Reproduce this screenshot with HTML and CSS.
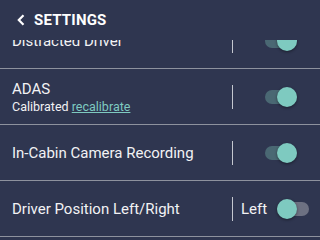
FILE: index.html
```html
<!DOCTYPE html>
<html lang="en">
<head>
    <meta charset="UTF-8">
    <meta name="viewport" content="width=device-width, initial-scale=1.0">
    <title>Settings</title>
    <link rel="stylesheet" href="styles.css">
</head>
<body>
    <div class="header">
        <svg class="back" width="10" height="12" viewBox="0 0 10 12">
            <polyline points="7.5,1.2 2.8,6 7.5,10.8" fill="none" stroke="#ffffff" stroke-width="2.2"/>
        </svg>
        <span class="title">SETTINGS</span>
    </div>

    <div class="viewport">
        <div class="list">
            <div class="row">
                <div class="label">Distracted Driver</div>
                <div class="controls">
                    <div class="divider"></div>
                    <div class="switch on"><div class="knob"></div></div>
                </div>
            </div>
            <div class="row">
                <div class="label">
                    ADAS
                    <div class="sub">Calibrated <a href="#" class="link">recalibrate</a></div>
                </div>
                <div class="controls">
                    <div class="divider"></div>
                    <div class="switch on"><div class="knob"></div></div>
                </div>
            </div>
            <div class="row">
                <div class="label">In-Cabin Camera Recording</div>
                <div class="controls">
                    <div class="divider"></div>
                    <div class="switch on"><div class="knob"></div></div>
                </div>
            </div>
            <div class="row">
                <div class="label">Driver Position Left/Right</div>
                <div class="controls">
                    <div class="divider"></div>
                    <span class="side">Left</span>
                    <div class="switch off"><div class="knob"></div></div>
                </div>
            </div>
        </div>
    </div>
</body>
</html>
```

FILE: styles.css
```css
body {
    margin: 0;
    width: 320px;
    height: 240px;
    overflow: hidden;
    background: #2f3650;
    color: #f2f2f4;
    font-family: Roboto, "Noto Sans", sans-serif;
}
.header {
    height: 40px;
    display: flex;
    align-items: center;
    padding-left: 16px;
    background: #2f3650;
}
.back {
    display: block;
    margin-right: 8px;
}
.title {
    font-size: 15px;
    font-weight: bold;
    letter-spacing: 0.2px;
    color: #ffffff;
}
.viewport {
    height: 200px;
    overflow: hidden;
}
.list {
    margin-top: -27px;
}
.row {
    height: 55px;
    border-bottom: 1px solid #8e929e;
    display: flex;
    align-items: center;
    padding-left: 12px;
}
.label {
    flex: 1;
    font-size: 15px;
    line-height: 18px;
}
.sub {
    font-size: 12.5px;
    line-height: 15px;
    margin-top: 1px;
}
.link {
    color: #7ecac0;
    text-decoration: underline;
}
.controls {
    width: 88px;
    display: flex;
    align-items: center;
}
.divider {
    width: 1px;
    height: 24px;
    background: #c4c7cf;
}
.side {
    font-size: 15px;
    margin-left: 8px;
}
.switch {
    position: relative;
    width: 32px;
    height: 20px;
}
.switch::before {
    content: "";
    position: absolute;
    left: 0;
    right: 0;
    top: 3px;
    height: 14px;
    border-radius: 7px;
}
.knob {
    position: absolute;
    top: 0;
    width: 20px;
    height: 20px;
    border-radius: 50%;
    background: #7ecac0;
    box-shadow: 0 1px 3px rgba(0, 0, 0, 0.45);
}
.switch.on {
    margin-left: 32px;
}
.switch.on::before {
    background: #4a6873;
}
.switch.on .knob {
    right: 0;
}
.switch.off {
    margin-left: 10px;
}
.switch.off::before {
    background: #6d7182;
}
.switch.off .knob {
    left: 0;
}
```
